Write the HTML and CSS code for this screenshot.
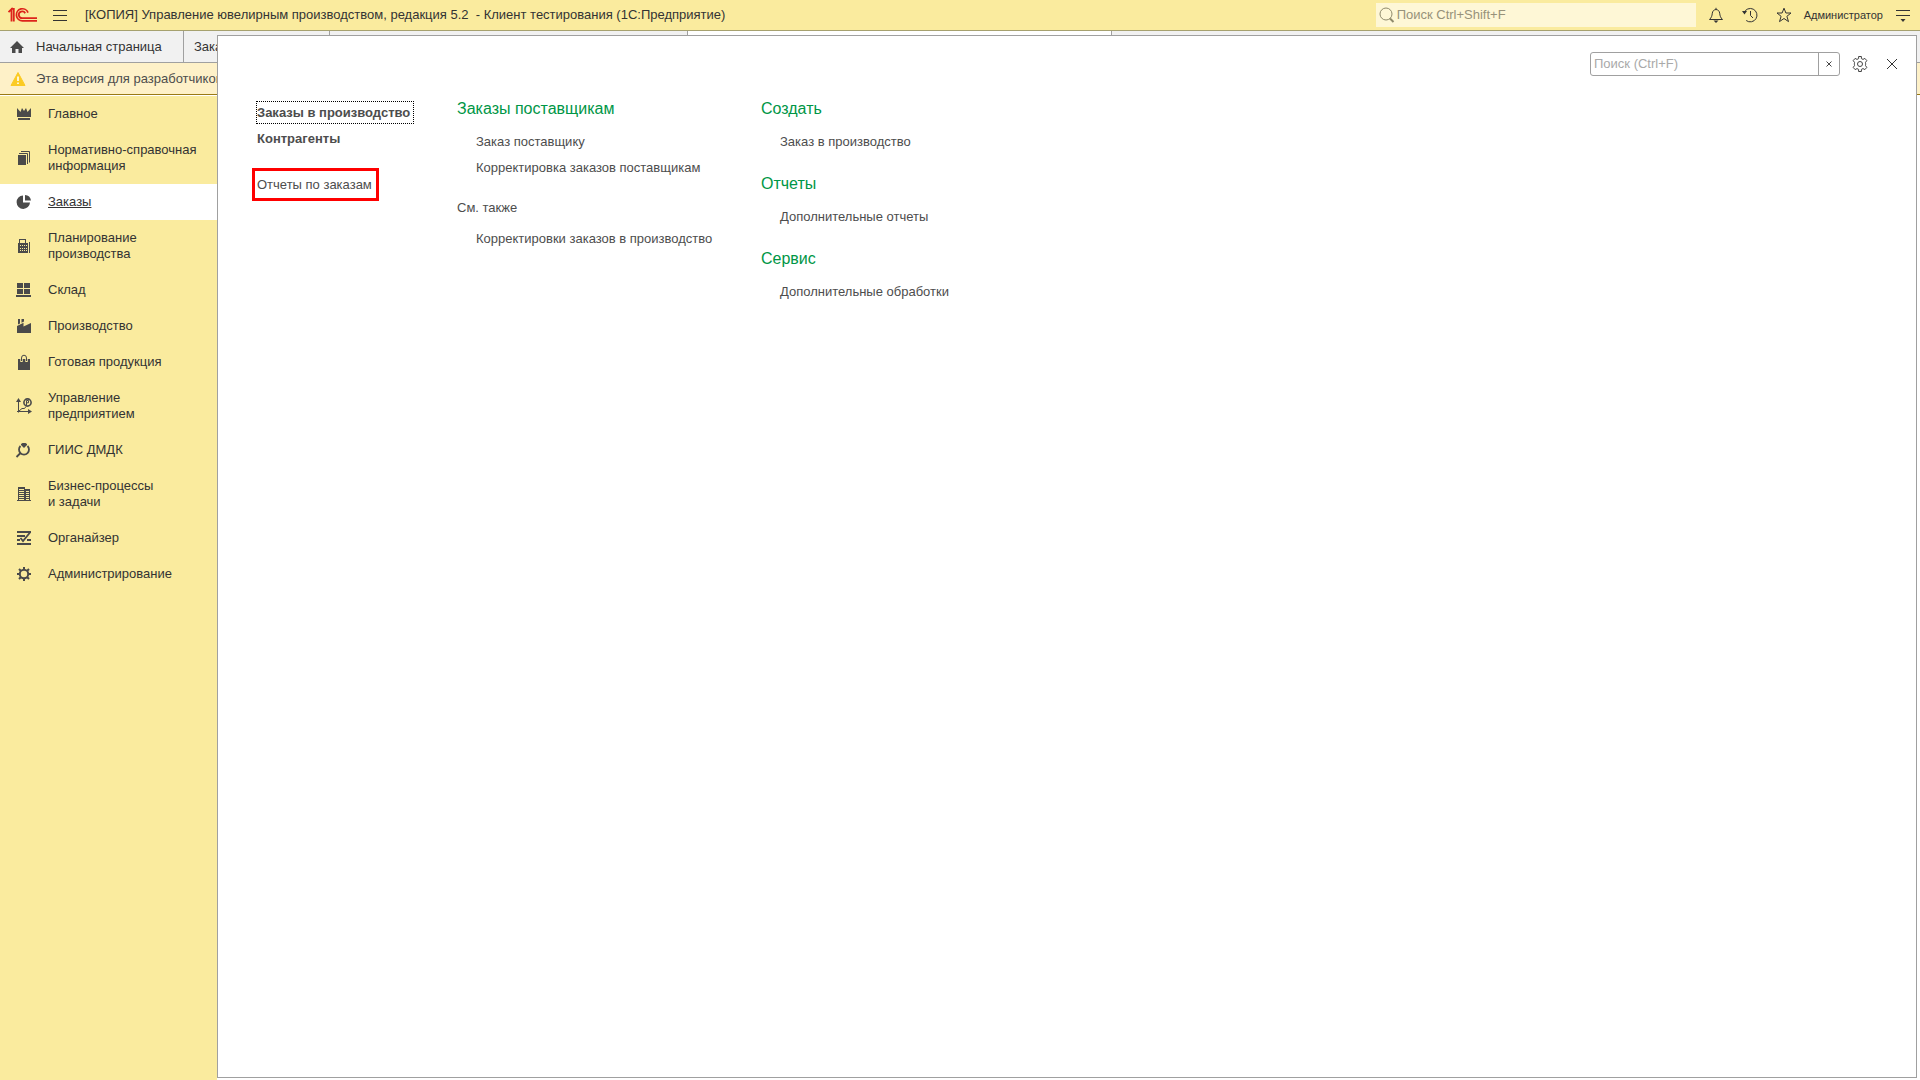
FILE: index.html
```html
<!DOCTYPE html>
<html lang="ru">
<head>
<meta charset="utf-8">
<title>Управление ювелирным производством</title>
<link rel="stylesheet" href="styles.css">
</head>
<body>
<header class="topbar">
  <svg class="logo" viewBox="0 0 30 14" width="30" height="14" fill="none" stroke="#dd241b" stroke-width="1.800">
    <path d="M.5 4.2 3.500 1.200V13.500M3 .8H5.800V13.500"/>
    <path d="M20 4.600A6 6 0 1 0 14.500 12.800H29"/>
    <path d="M17.200 5.200A3.400 3.400 0 1 0 14.500 10.200H29"/>
  </svg>
  <button class="icon-btn burger" aria-label="Меню">
    <svg viewBox="0 0 14 12" width="14" height="12" stroke="#333" shape-rendering="crispEdges"><path d="M0 1.500H14M0 6.500H14M0 11.500H14"/></svg>
  </button>
  <h1 class="title">[КОПИЯ] Управление ювелирным производством, редакция 5.2 &nbsp;- Клиент тестирования (1С:Предприятие)</h1>
  <label class="global-search">
    <svg viewBox="0 0 16 16" width="16" height="16" fill="none" stroke="#8f8a6c"><circle cx="7" cy="7" r="6"/><path d="M11 11.500 14.500 15" stroke-width="2"/></svg>
    <input type="text" placeholder="Поиск Ctrl+Shift+F" aria-label="Глобальный поиск">
  </label>
  <div class="tools">
    <button class="icon-btn" aria-label="Уведомления">
      <svg viewBox="0 0 16 16" width="16" height="16" fill="none" stroke="#333"><path d="M1.500 12.500H14.500C12.500 10.500 12 9 11.700 6.200 11.400 4 10.200 2.800 8 2.500 5.800 2.800 4.600 4 4.300 6.200 4 9 3.500 10.500 1.500 12.500Z"/><path d="M8 .8V2.500"/><path d="M5.500 13.500H10.500L8 16Z" fill="#333" stroke="none"/></svg>
    </button>
    <button class="icon-btn" aria-label="История">
      <svg viewBox="0 0 16 16" width="16" height="16" fill="none" stroke="#333"><path d="M2 5.800A6.700 6.700 0 1 1 4.200 13.500"/><path d="M8.500 4V8.500L11 11"/><path d="M0 4H5L2.500 7.500Z" fill="#333" stroke="none"/></svg>
    </button>
    <button class="icon-btn" aria-label="Избранное">
      <svg viewBox="0 0 16 16" width="16" height="16" fill="none" stroke="#333"><path d="M8 1.200 9.900 6H15L10.900 9.300 12.500 14.600 8 11.500 3.500 14.600 5.100 9.300 1 6H6.100Z"/></svg>
    </button>
    <a class="user" href="#">Администратор</a>
    <button class="icon-btn" aria-label="Сервис и настройки">
      <svg viewBox="0 0 14 14" width="14" height="14"><path d="M0 2.500H14M0 7.500H14" stroke="#333" shape-rendering="crispEdges"/><path d="M4.500 11H9.500L7 14Z" fill="#333"/></svg>
    </button>
  </div>
</header>

<nav class="tabs" aria-label="Открытые окна">
  <a class="tab tab-home" href="#">
    <svg viewBox="0 0 14 12" width="14" height="12" fill="#4a4a4a"><path d="M7 0 14 7H12V12H8.500V8H5.500V12H2V7H0Z"/></svg>
    Начальная страница
  </a>
  <a class="tab tab-orders" href="#">Заказы</a>
  <a class="tab tab-list" href="#" aria-label="Список"></a>
  <a class="tab tab-current" href="#" aria-label="Текущее окно"></a>
</nav>

<div class="notice">
  <svg viewBox="0 0 14 14" width="14" height="14"><path d="M7 .5 14 13.500H0Z" fill="#fbcb23" stroke="#fbcb23" stroke-linejoin="round"/><path d="M7 4.500V9M7 10.500V12" stroke="#fff" stroke-width="1.600"/></svg>
  Эта версия для разработчиков
</div>

<div class="workspace">
  <nav class="sections" aria-label="Разделы">
    <a class="section" href="#"><svg viewBox="0 0 16 16"><path d="M1 2 4.500 6 6 2 8 5 10 2 11.500 6 15 2V11H1ZM2 12H14V14H2Z"/></svg>Главное</a>
    <a class="section" href="#"><svg viewBox="0 0 16 16"><path d="M2 5H10V15H2Z"/><path d="M3 3.500H11.500V14M5 1.500H13.500V12.500" fill="none" stroke="#4a4a4a"/></svg>Нормативно-справочная<br>информация</a>
    <a class="section current" href="#"><svg viewBox="0 0 16 16"><path d="M7 1.500V8.500H14A6.700 6.700 0 1 1 7 1.500ZM9 1A6.500 6.500 0 0 1 15 6.500H9Z"/></svg><span>Заказы</span></a>
    <a class="section" href="#"><svg viewBox="0 0 16 16" shape-rendering="crispEdges"><path fill-rule="evenodd" d="M3 1H10V5H12V15H2V5H3ZM4 2V5H9V2ZM4 7V8H5V7ZM6 7V8H7V7ZM8 7V8H9V7ZM10 7V8H11V7ZM4 10V11H5V10ZM6 10V11H7V10ZM8 10V11H9V10ZM10 10V11H11V10ZM4 12V13H5V12ZM6 12V13H7V12ZM8 12V13H9V12ZM10 12V13H11V12ZM13 4H14V15H13Z"/></svg>Планирование<br>производства</a>
    <a class="section" href="#"><svg viewBox="0 0 16 16" shape-rendering="crispEdges"><path d="M1 1H7V6H1ZM8 1H14V6H8ZM1 7H7V12H1ZM8 7H14V12H8ZM0 13H15V15H0Z"/></svg>Склад</a>
    <a class="section" href="#"><svg viewBox="0 0 16 16"><path d="M1 8 7.500 4.800V8.500L15 5V15H1ZM2 1H4V5.500L2 6.500ZM5.500 1H8V3.500L5.500 4.800Z"/></svg>Производство</a>
    <a class="section" href="#"><svg viewBox="0 0 16 16"><path d="M2 5H14V16H2Z"/><path d="M5.500 8V4A2.500 2.800 0 0 1 10.500 4V8" fill="none" stroke="#faeb9e" stroke-width="2.400"/><path d="M5.500 7V4A2.500 2.800 0 0 1 10.500 4V7" fill="none" stroke="#4a4a4a"/></svg>Готовая продукция</a>
    <a class="section" href="#"><svg viewBox="0 0 16 16"><path d="M2.500 2V14.500M1 13.500H13M3 13 6 10.500H8.500L10 8.500" fill="none" stroke="#4a4a4a"/><path d="M0 4 2.500 0 5 4ZM12 11 16 13.500 12 16Z"/><circle cx="11.500" cy="4.500" r="3.600" fill="none" stroke="#4a4a4a" stroke-width="1.600"/><path d="M10.500 7V2.500H12.500V4.800H10" fill="none" stroke="#4a4a4a"/></svg>Управление<br>предприятием</a>
    <a class="section" href="#"><svg viewBox="0 0 16 16"><path d="M5 2 6.500 1H9.500L11 2V3L8 6 5 3Z"/><path d="M4.500 4A5 5 0 1 0 11.500 4M4 11.500.5 15" fill="none" stroke="#4a4a4a" stroke-width="1.800"/></svg>ГИИС ДМДК</a>
    <a class="section" href="#"><svg viewBox="0 0 16 16" shape-rendering="crispEdges"><path fill-rule="evenodd" d="M2 1H9V3H14V14H15V15H1V14H2ZM3 3V4H8V3ZM3 5V6H8V5ZM3 7V8H8V7ZM3 9V10H8V9ZM3 11V12H8V11ZM3 13V14H8V13ZM10 5V6H13V5ZM10 7V8H13V7ZM10 9V10H13V9ZM10 11V12H13V11ZM10 13V14H13V13Z"/></svg>Бизнес-процессы<br>и задачи</a>
    <a class="section" href="#"><svg viewBox="0 0 16 16"><path d="M1 1H15V3H1ZM1 5H9V7H1ZM1 9H4V11H1ZM11 9H15V11H11ZM1 13H15V15H1Z"/><path d="M4.500 8 7 11 14 2.500" fill="none" stroke="#4a4a4a" stroke-width="1.800"/></svg>Органайзер</a>
    <a class="section" href="#"><svg viewBox="0 0 16 16" stroke="#4a4a4a"><circle cx="8" cy="8" r="4.200" fill="none" stroke-width="2"/><path d="M8 1V3.500M8 12.500V15M1 8H3.500M12.500 8H15M3 3 5 5M11 11 13 13M13 3 11 5M5 11 3 13" stroke-width="2"/></svg>Администрирование</a>
  </nav>
</div>

<main class="panel">
  <div class="panel-bar">
    <div class="field">
      <input type="text" placeholder="Поиск (Ctrl+F)" aria-label="Поиск">
      <button aria-label="Очистить"><svg viewBox="0 0 6 6" width="6" height="6" stroke="#444"><path d="M.5.5 5.500 5.500M5.500.5.5 5.500"/></svg></button>
    </div>
    <button class="icon-btn" aria-label="Настройка">
      <svg viewBox="0 0 16 16" width="16" height="16" fill="none" stroke="#444" stroke-linejoin="round"><circle cx="8" cy="8" r="2.500"/><path d="M6.600.5H9.400V2.600L11 3.400 12.900 2.400 14.800 4.600 13.500 6.400 13.600 7.200V8.800L13.500 9.600 14.800 11.400 12.900 13.600 11 12.600 9.400 13.400V15.500H6.600V13.400L5 12.600 3.100 13.600 1.200 11.400 2.500 9.600 2.400 8.800V7.200L2.500 6.400 1.200 4.600 3.100 2.400 5 3.400 6.600 2.600Z"/></svg>
    </button>
    <button class="icon-btn" aria-label="Закрыть">
      <svg viewBox="0 0 10 10" width="10" height="10" stroke="#333"><path d="M0 0 10 10M10 0 0 10"/></svg>
    </button>
  </div>
  <div class="columns">
    <ul class="column main-links">
      <li><a class="important focused" href="#">Заказы в производство</a></li>
      <li><a class="important" href="#">Контрагенты</a></li>
      <li class="apart"><a class="marked" href="#">Отчеты по заказам</a></li>
    </ul>
    <div class="column">
      <section class="group">
        <h2>Заказы поставщикам</h2>
        <ul>
          <li><a href="#">Заказ поставщику</a></li>
          <li><a href="#">Корректировка заказов поставщикам</a></li>
        </ul>
      </section>
      <section class="group">
        <h3>См. также</h3>
        <ul>
          <li><a href="#">Корректировки заказов в производство</a></li>
        </ul>
      </section>
    </div>
    <div class="column">
      <section class="group">
        <h2>Создать</h2>
        <ul><li><a href="#">Заказ в производство</a></li></ul>
      </section>
      <section class="group">
        <h2>Отчеты</h2>
        <ul><li><a href="#">Дополнительные отчеты</a></li></ul>
      </section>
      <section class="group">
        <h2>Сервис</h2>
        <ul><li><a href="#">Дополнительные обработки</a></li></ul>
      </section>
    </div>
  </div>
</main>
</body>
</html>
```
FILE: styles.css
```css
* { box-sizing: border-box; }
body {
  margin: 0;
  min-height: 100vh;
  display: flex;
  flex-direction: column;
  position: relative;
  background: #fff;
  color: #333;
  font: 13px/16px "Liberation Sans", Arial, sans-serif;
}
a { color: inherit; text-decoration: none; }
ul { list-style: none; margin: 0; padding: 0; }
h1, h2, h3 { margin: 0; font-weight: normal; }
input, button { font: inherit; color: inherit; margin: 0; }
button { cursor: pointer; }
svg { display: block; flex: none; overflow: visible; }

.icon-btn {
  display: flex;
  align-items: center;
  justify-content: center;
  padding: 0;
  border: 0;
  background: none;
}

.topbar {
  display: flex;
  align-items: center;
  height: 31px;
  padding: 0 10px 0 8px;
  background: #faeb9e;
  border-bottom: 1px solid #a6a16f;
}
.burger { margin: 0 18px 0 15px; }
.title { flex: 1; font-size: 13px; white-space: nowrap; }
.global-search {
  display: flex;
  align-items: center;
  gap: 2px;
  width: 320px;
  height: 24px;
  padding-left: 3px;
  background: #fef7d6;
}
.global-search input {
  flex: 1;
  min-width: 0;
  padding: 0;
  border: 0;
  outline: 0;
  background: none;
}
.global-search input::placeholder { color: #97927a; opacity: 1; }
.tools { display: flex; align-items: center; gap: 18px; margin-left: 12px; }
.user { margin: 0 -5px 0 -6px; font-size: 11px; }

.tabs {
  display: flex;
  height: 32px;
  background: #f1f1f1;
  border-bottom: 1px solid #a0a0a0;
}
.tab {
  display: flex;
  align-items: center;
  padding-left: 10px;
  border-right: 1px solid #a0a0a0;
}
.tab-home { width: 184px; gap: 12px; }
.tab-orders { width: 146px; }
.tab-list { width: 358px; }
.tab-current { width: 424px; background: #fff; }

.notice {
  display: flex;
  align-items: center;
  gap: 11px;
  height: 32px;
  padding-left: 11px;
  background: #fef1c8;
  border-bottom: 1px solid #9a7a14;
  color: #4d4d4d;
}

.workspace { flex: 1; display: flex; padding-top: 1px; }
.sections { width: 217px; background: #faeb9e; }
.section {
  display: flex;
  align-items: center;
  gap: 16px;
  padding: 10px 8px 10px 16px;
}
.section svg { width: 16px; height: 16px; fill: #4a4a4a; }
.current { background: #fff; }
.current span { text-decoration: underline; }

.panel {
  position: absolute;
  top: 35px;
  right: 3px;
  bottom: 2px;
  left: 217px;
  background: #fff;
  border: 1px solid #a0a0a0;
  color: #4d4d4d;
}
.panel-bar {
  display: flex;
  align-items: center;
  justify-content: flex-end;
  padding: 16px 19px 0 0;
}
.panel-bar .icon-btn { margin-left: 12px; }
.panel-bar .icon-btn + .icon-btn { margin-left: 19px; }
.field {
  display: flex;
  width: 250px;
  height: 24px;
  border: 1px solid #a0a0a0;
  border-radius: 3px;
}
.field input {
  flex: 1;
  min-width: 0;
  padding: 0 3px;
  border: 0;
  outline: 0;
  background: none;
}
.field input::placeholder { color: #a9a9a9; opacity: 1; }
.field button {
  display: flex;
  align-items: center;
  justify-content: center;
  width: 21px;
  padding: 0;
  border: 0;
  border-left: 1px solid #a0a0a0;
  background: none;
}
.columns {
  display: grid;
  grid-template-columns: 160px 264px 1fr;
  gap: 40px;
  padding: 23px 39px;
}
.main-links { padding-top: 1px; }
.main-links li { padding: 5px 0; }
.main-links .apart { padding-top: 25px; }
.important { font-weight: bold; }
.focused { padding: 3px 3px 3px 0; outline: 1px dotted #000; }
.marked { padding: 6px 4px 6px 2px; margin-left: -2px; outline: 3px solid #f00; }
.group { margin-bottom: 18px; }
.group h2 { font-size: 16px; line-height: 20px; color: #009646; }
.group ul { padding: 11px 0 0 19px; }
.group li { padding: 4px 0 6px; }
.group h3 { font-size: 13px; }
```
